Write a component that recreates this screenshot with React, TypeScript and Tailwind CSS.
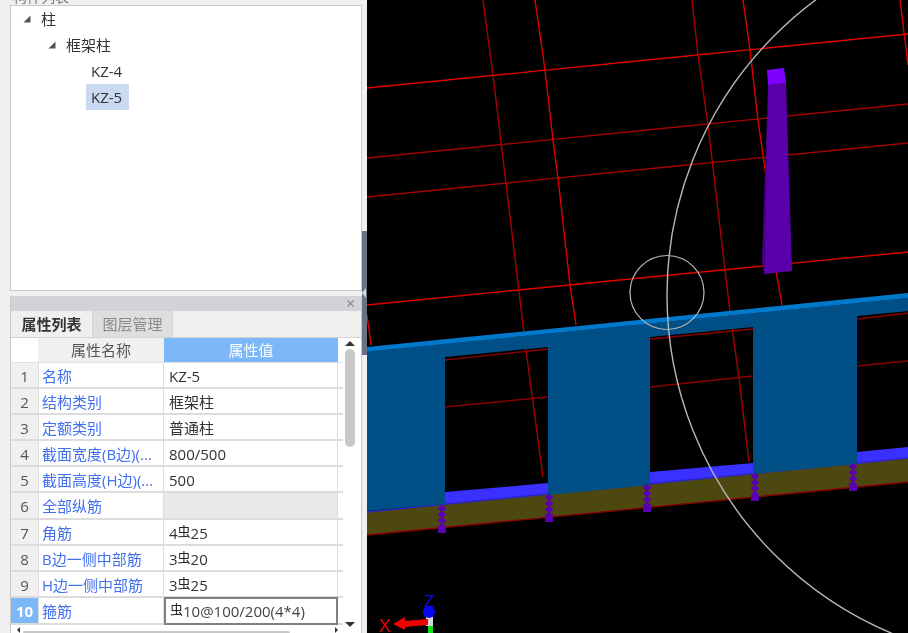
import { X } from "lucide-react";

const font = "font-['Open_Sans','Noto_Sans_CJK_SC',sans-serif]";

type Row = { no: number; name: string; value: React.ReactNode };

function Rebar({ before, after }: { before?: string; after: string }) {
  return (
    <span>
      {before}
      <span className="relative -top-[3px] text-[13px] text-[#222]">虫</span>
      {after}
    </span>
  );
}

const rows: Row[] = [
  { no: 1, name: "名称", value: "KZ-5" },
  { no: 2, name: "结构类别", value: "框架柱" },
  { no: 3, name: "定额类别", value: "普通柱" },
  { no: 4, name: "截面宽度(B边)(...", value: "800/500" },
  { no: 5, name: "截面高度(H边)(...", value: "500" },
  { no: 6, name: "全部纵筋", value: "" },
  { no: 7, name: "角筋", value: <Rebar before="4" after="25" /> },
  { no: 8, name: "B边一侧中部筋", value: <Rebar before="3" after="20" /> },
  { no: 9, name: "H边一侧中部筋", value: <Rebar before="3" after="25" /> },
  { no: 10, name: "箍筋", value: <Rebar after="10@100/200(4*4)" /> },
];

function TreeArrow() {
  return (
    <svg width="8" height="8" viewBox="0 0 8 8" className="shrink-0">
      <path d="M7.5 .5V7.5H.5Z" fill="#555" />
    </svg>
  );
}

function TreePanel() {
  return (
    <div className="h-[286px] border border-[#c9c9c9] bg-white text-[15px] text-[#333]">
      <div className="flex h-[26px] items-center gap-[10px] pl-[12px]">
        <TreeArrow />
        <span>柱</span>
      </div>
      <div className="flex h-[26px] items-center gap-[10px] pl-[37px]">
        <TreeArrow />
        <span>框架柱</span>
      </div>
      <div className="flex h-[26px] items-center pl-[80px]">KZ-4</div>
      <div className="ml-[75px] flex h-[26px] w-[43px] items-center bg-[#c9daf1] pl-[5px]">KZ-5</div>
    </div>
  );
}

function PropertyRow({ row }: { row: Row }) {
  const selected = row.no === 10;
  const tall = row.no === 6 || selected;
  return (
    <div className={tall ? "flex h-[27px] w-[332px] border-b-2 border-[#dcdcdc]" : "flex h-[26px] w-[332px] border-b-2 border-[#dcdcdc]"}>
      <div
        className={
          selected
            ? "flex w-[27px] items-center justify-center bg-[#7cb8f7] pt-[2px] font-bold text-white"
            : "flex w-[27px] items-center justify-center bg-[#f0f0f0] pt-[2px] text-[#555]"
        }
      >
        {row.no}
      </div>
      <div className="flex w-[126px] items-center whitespace-nowrap border-x border-[#dcdcdc] pl-[3px] pt-[2px] text-[#4070ee]">
        {row.name}
      </div>
      {selected ? (
        <div className="-mt-[1px] flex h-[28px] w-[174px] items-center border-2 border-[#808080] bg-white pl-[4px] text-[#444]">
          {row.value}
        </div>
      ) : (
        <div
          className={
            row.no === 6
              ? "w-[174px] border-r border-[#dcdcdc] bg-[#e9e9e9]"
              : "flex w-[174px] items-center border-r border-[#dcdcdc] pl-[5px] pt-[2px] text-[#333]"
          }
        >
          {row.value}
        </div>
      )}
    </div>
  );
}

function PropertyPanel() {
  return (
    <div className="mt-[5px] flex h-[337px] flex-col border-x border-[#c9c9c9] text-[15px]">
      <div className="flex h-[15px] items-center justify-end bg-[#d2d3d6] pr-[5px]">
        <X size={11} strokeWidth={2.5} className="text-[#8a8a8a]" />
      </div>
      <div className="flex h-[27px] border-b border-[#d4d4d4] bg-[#efefef]">
        <div className="flex w-[81px] items-center justify-center font-semibold text-[#333]">属性列表</div>
        <div className="flex w-[81px] items-center justify-center border-x border-[#d4d4d4] bg-[#dedede] text-[#8a8a8a]">
          图层管理
        </div>
      </div>
      <div className="relative flex-1 overflow-hidden bg-white">
        <div className="flex h-[25px] w-[332px] border-b border-[#e2e2e2]">
          <div className="w-[27px]" />
          <div className="flex w-[126px] items-center justify-center bg-[#f0f0f0] text-[#555]">属性名称</div>
          <div className="flex w-[174px] items-center justify-center bg-[#7cb8f7] text-white">属性值</div>
        </div>
        {rows.map((row) => (
          <PropertyRow key={row.no} row={row} />
        ))}
        {/* vertical scrollbar */}
        <div className="absolute right-0 top-0 flex h-[290px] w-[21px] flex-col items-center pr-[1px]">
          <div className="mt-[3px] h-0 w-0 border-x-[5px] border-b-[5px] border-x-transparent border-b-[#333]" />
          <div className="mt-[3px] h-[98px] w-[10px] rounded-[5px] bg-[#c8c8c8]" />
          <div className="mt-auto mb-[1px] h-0 w-0 border-x-[5px] border-t-[5px] border-x-transparent border-t-[#333]" />
        </div>
        {/* horizontal scrollbar */}
        <div className="absolute bottom-0 left-0 flex h-[4px] w-full items-end">
          <div className="ml-[6px] h-0 w-0 border-y-[3px] border-r-[3px] border-y-transparent border-r-[#333]" />
          <div className="ml-[3px] h-[2px] w-[267px] rounded-t-[4px] bg-[#c8c8c8]" />
          <div className="ml-[45px] h-0 w-0 border-y-[3px] border-l-[3px] border-y-transparent border-l-[#333]" />
        </div>
      </div>
    </div>
  );
}

const gridLines: { d: string; c: string }[] = [
  { d: "M367 88L667 58L908 34", c: "#e00000" },
  { d: "M367 158L667 128L908 104", c: "#a00000" },
  { d: "M367 197L667 167L908 143", c: "#a00000" },
  { d: "M367 305L640 278L908 252", c: "#e00000" },
  { d: "M367 315L371 345", c: "#e00000" },
  { d: "M483 0L493 75L520 300L526 350L543 477", c: "#a80000" },
  { d: "M535 0L545 70L553 140L558 178L570 285L576 325", c: "#e00000" },
  { d: "M692 0L698 55L708 125L725 270L731 320L739 378L749 462", c: "#a80000" },
  { d: "M743 0L750 50L758 120L768 190", c: "#e00000" },
  { d: "M775 265L782 305", c: "#e00000" },
  { d: "M900 0L908 65", c: "#e00000" },
  { d: "M445 360L548 349", c: "#8a0000" },
  { d: "M445 407L548 397", c: "#8a0000" },
  { d: "M650 339L753 329", c: "#8a0000" },
  { d: "M650 387L753 376", c: "#8a0000" },
  { d: "M857 319L908 313", c: "#8a0000" },
  { d: "M857 366L908 361", c: "#8a0000" },
];

const rebars = [
  { x: 442, y: 505 },
  { x: 549, y: 494 },
  { x: 647, y: 484 },
  { x: 755, y: 473 },
  { x: 853, y: 463 },
];

function Viewport() {
  return (
    <svg width="541" height="633" viewBox="367 0 541 633" className="block shrink-0 bg-black">
      {gridLines.map((l) => (
        <path key={l.d} d={l.d} stroke={l.c} strokeWidth="1.4" fill="none" />
      ))}

      {/* olive base band */}
      <polygon points="367,512 908,458 908,482 367,535" fill="#4d4710" />
      <path d="M367 535L908 482" stroke="#8a0000" strokeWidth="1.4" />

      {/* bright blue faces in the openings */}
      <polygon points="445,492 548,483 548,494 445,504" fill="#3a30ff" />
      <polygon points="650,472 753,463 753,474 650,484" fill="#3a30ff" />
      <polygon points="857,452 908,447 908,458 857,464" fill="#3a30ff" />
      <path d="M367 512L908 458" stroke="#2c24c8" strokeWidth="1.5" />

      {/* frame */}
      <polygon
        points="367,351 908,298 908,311 857,316 857,464 753,474 753,327 650,337 650,485 548,495 548,347 445,357 445,504 367,511"
        fill="#004f86"
      />
      <polygon points="367,347 908,293 908,298 367,351.5" fill="#0078cc" />

      {/* rebar stubs */}
      {rebars.map((r) => (
        <g key={r.x} fill="#5a00b4">
          {[0, 6, 12, 18].map((o) => (
            <polygon
              key={o}
              points={`${r.x},${r.y + o} ${r.x + 4.5},${r.y + o + 3.5} ${r.x},${r.y + o + 7} ${r.x - 4.5},${r.y + o + 3.5}`}
            />
          ))}
          <rect x={r.x - 4} y={r.y + 23} width="8" height="5" />
        </g>
      ))}

      {/* column */}
      <polygon points="768,85 762,260 764,274" fill="#46008a" />
      <polygon points="768,85 786,83 792,271 764,274" fill="#5a00aa" />
      <polygon points="767,70 784,68 786,83 768,85" fill="#8000ff" />

      {/* rotate guides */}
      <circle cx="667" cy="292.5" r="37" fill="none" stroke="#b8b8b8" strokeWidth="1.2" />
      <circle cx="1034" cy="295" r="367" fill="none" stroke="#b8b8b8" strokeWidth="1.4" />

      {/* axis gizmo */}
      <rect x="428" y="624" width="5" height="9" fill="#10e010" />
      <rect x="426" y="617" width="7" height="9" fill="#d8d8d8" />
      <polygon points="393,624 405,617 405,621 428,619 428,625 405,627 405,630" fill="#f00000" />
      <circle cx="429" cy="612" r="6" fill="#0808f0" />
      <text x="429" y="607" textAnchor="middle" fontSize="17" fill="#0808f0" fontFamily="'Liberation Sans', sans-serif">
        Z
      </text>
      <text x="385" y="632" textAnchor="middle" fontSize="18" fill="#f00000" fontFamily="'Liberation Sans', sans-serif">
        X
      </text>
    </svg>
  );
}

export default function App() {
  return (
    <div className={`flex h-[633px] w-[908px] overflow-hidden bg-[#f0f0f0] blur-[0.35px] ${font}`}>
      <div className="flex w-[362px] shrink-0 flex-col pl-[10px]">
        <div className="h-[5px] overflow-hidden text-[14px] leading-[14px] text-[#777]">
          <div className="-mt-[10px] pl-[3px]">构件列表</div>
        </div>
        <TreePanel />
        <PropertyPanel />
      </div>
      <div className="relative w-[5px] shrink-0 pt-[231px]">
        <div className="relative h-[124px] bg-[#667382]">
          <div className="absolute left-0 top-[57px] h-0 w-0 border-y-[5px] border-r-[4px] border-y-transparent border-r-[#d8d8d8]" />
        </div>
      </div>
      <Viewport />
    </div>
  );
}
